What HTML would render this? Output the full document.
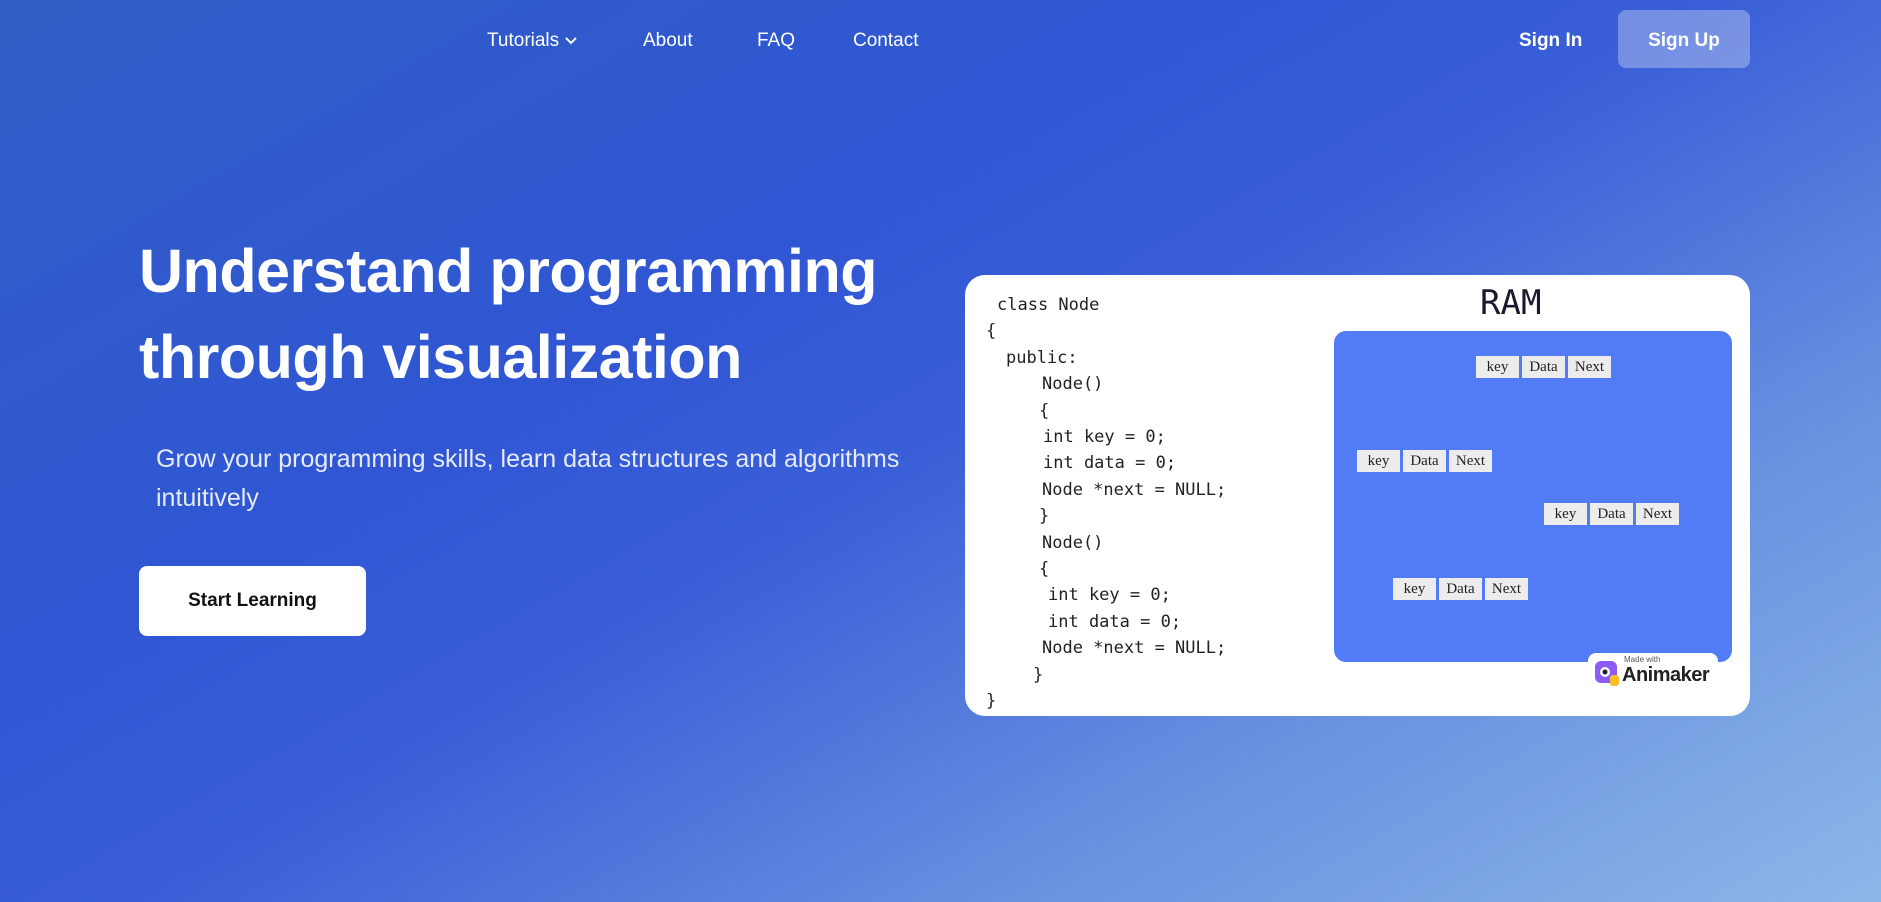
<!DOCTYPE html>
<html><head><meta charset="utf-8"><style>
*{margin:0;padding:0;box-sizing:border-box}
html,body{width:1881px;height:902px;overflow:hidden}
body{font-family:"Liberation Sans",sans-serif;color:#fff;position:relative;
background:linear-gradient(150deg,#2f5ec4 0%,#3056d4 35%,#3a5fd8 50%,#6a92e0 75%,#8db7e8 100%);}
.nav{position:absolute;top:30px;font-size:19px}
.signup{position:absolute;left:1618px;top:10px;width:132px;height:58px;border-radius:8px;background:rgba(255,255,255,0.3);font-size:19px;font-weight:bold;text-align:center;line-height:62px}
h1{position:absolute;left:139px;top:228px;font-size:61px;line-height:86px;font-weight:bold;letter-spacing:-0.5px}
p.sub{position:absolute;left:156px;top:440px;font-size:25px;line-height:39px;color:#e6ebfa;width:800px}
.btn{position:absolute;left:139px;top:566px;width:227px;height:70px;border-radius:8px;background:#fff;color:#111;font-size:19px;font-weight:bold;text-align:center;line-height:70px}
.card{position:absolute;left:965px;top:275px;width:785px;height:441px;border-radius:20px;background:#fff;overflow:hidden}
.code{position:absolute;left:0;top:1px;font-family:"DejaVu Sans Mono","Liberation Mono",monospace;font-size:17px;color:#222;line-height:26.4px;white-space:pre}
.code div{position:absolute;white-space:pre}
.ram{position:absolute;left:515px;top:8px;font-family:"DejaVu Sans Mono",monospace;font-size:34px;color:#1a1a2e}
.box{position:absolute;left:369px;top:56px;width:398px;height:331px;border-radius:12px;background:#527cf5}
.node{position:absolute;display:flex;gap:3px}
.node span{background:#ececec;color:#222;font-family:"Liberation Serif",serif;font-size:15px;height:22px;line-height:22px;width:43px;text-align:center}
.anim{position:absolute;left:623px;top:378px;width:130px;height:38px;background:#fff;border-radius:8px;color:#222}
</style></head><body>
<div class="nav" style="left:487px">Tutorials <svg width="14" height="10" viewBox="0 0 14 10"><path d="M2 2 L7 7 L12 2" stroke="#fff" stroke-width="2" fill="none"/></svg></div>
<div class="nav" style="left:643px">About</div>
<div class="nav" style="left:757px">FAQ</div>
<div class="nav" style="left:853px">Contact</div>
<div class="nav" style="left:1519px;font-weight:bold">Sign In</div>
<div class="signup">Sign Up</div>
<h1>Understand programming<br>through visualization</h1>
<p class="sub">Grow your programming skills, learn data structures and algorithms intuitively</p>
<div class="btn">Start Learning</div>
<div class="card">
<div class="code">
<div style="left:32px;top:16px">class Node</div>
<div style="left:21px;top:42px">{</div>
<div style="left:41px;top:69px">public:</div>
<div style="left:77px;top:95px">Node()</div>
<div style="left:74px;top:122px">{</div>
<div style="left:78px;top:148px">int key = 0;</div>
<div style="left:78px;top:174px">int data = 0;</div>
<div style="left:77px;top:201px">Node *next = NULL;</div>
<div style="left:74px;top:227px">}</div>
<div style="left:77px;top:254px">Node()</div>
<div style="left:74px;top:280px">{</div>
<div style="left:83px;top:306px">int key = 0;</div>
<div style="left:83px;top:333px">int data = 0;</div>
<div style="left:77px;top:359px">Node *next = NULL;</div>
<div style="left:68px;top:386px">}</div>
<div style="left:21px;top:412px">}</div>
</div>
<div class="ram">RAM</div>
<div class="box"></div>
<div class="node" style="left:511px;top:81px"><span>key</span><span>Data</span><span>Next</span></div>
<div class="node" style="left:392px;top:175px"><span>key</span><span>Data</span><span>Next</span></div>
<div class="node" style="left:579px;top:228px"><span>key</span><span>Data</span><span>Next</span></div>
<div class="node" style="left:428px;top:303px"><span>key</span><span>Data</span><span>Next</span></div>
<div class="anim">
<svg style="position:absolute;left:6px;top:6px" width="26" height="28"><rect x="1" y="2" width="22" height="22" rx="6" fill="#8b5cf6"/><circle cx="11" cy="13" r="5" fill="#fff"/><circle cx="11" cy="13" r="2.5" fill="#222"/><rect x="16" y="16" width="9" height="11" rx="3" fill="#fbbf24"/></svg>
<div style="position:absolute;left:36px;top:2px;font-size:8px;color:#555">Made with</div>
<div style="position:absolute;left:34px;top:11px;font-size:20px;font-weight:bold;letter-spacing:-0.5px">Animaker</div>
</div>
</div>
</body></html>
